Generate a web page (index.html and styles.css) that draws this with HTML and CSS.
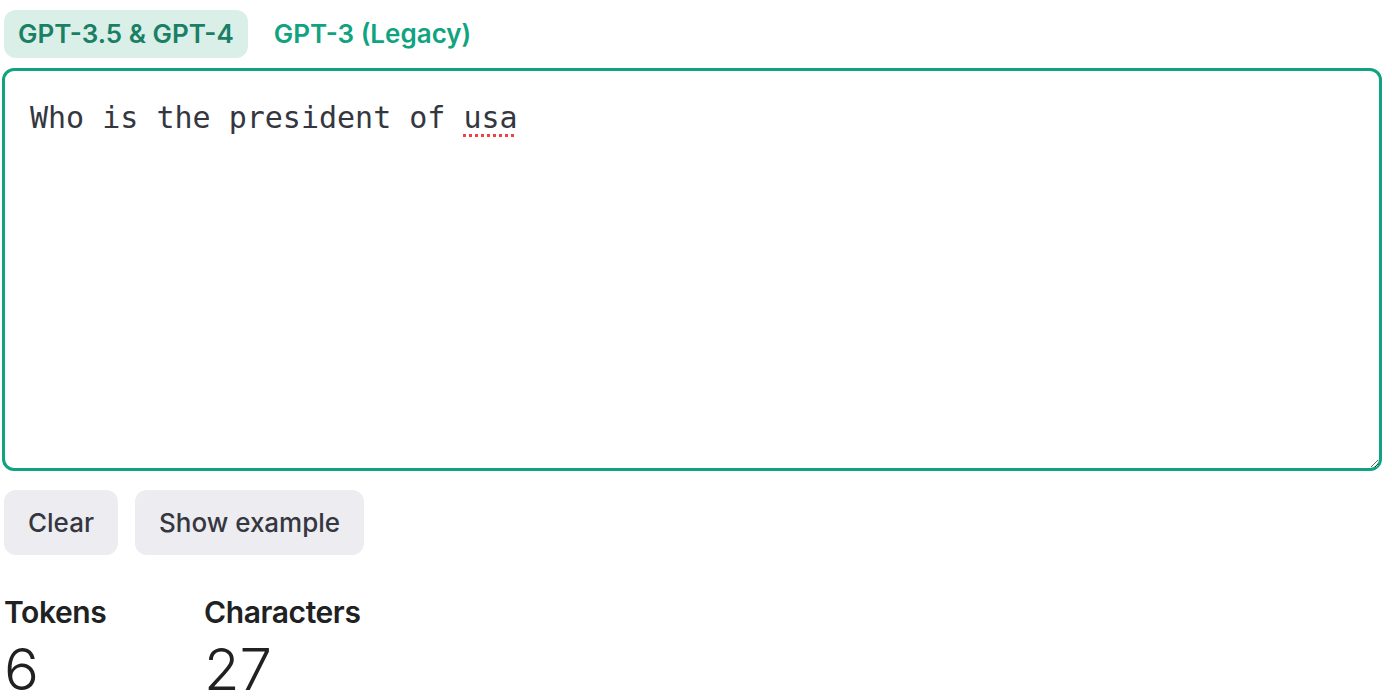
FILE: index.html
```html
<!DOCTYPE html>
<html>
<head>
<meta charset="utf-8">
<link rel="stylesheet" href="styles.css">
</head>
<body>
<div class="page">
  <div class="tabs">
    <div class="tab active">GPT-3.5 &amp; GPT-4</div>
    <div class="tab">GPT-3 (Legacy)</div>
  </div>
  <div class="editor">Who is the president of <span class="misspelt">usa</span></div>
  <div class="actions">
    <button class="btn">Clear</button>
    <button class="btn">Show example</button>
  </div>
  <div class="stats">
    <div class="stat">
      <div class="stat-label">Tokens</div>
      <div class="stat-value">6</div>
    </div>
    <div class="stat">
      <div class="stat-label">Characters</div>
      <div class="stat-value">27</div>
    </div>
  </div>
</div>
</body>
</html>
```

FILE: styles.css
```css
html, body {
  margin: 0;
  padding: 0;
  background: #ffffff;
}
.page {
  padding: 10px 10px 0 2px;
  font-family: Inter, "Noto Sans", sans-serif;
}
.tabs {
  display: flex;
  gap: 12px;
  padding-left: 2px;
}
.tab {
  height: 48px;
  line-height: 48px;
  padding: 0 14px;
  border-radius: 12px;
  font-size: 26px;
  font-weight: 600;
  letter-spacing: 0;
  color: #10a37f;
}
.tab.active {
  background: #d9efe8;
  color: #1a7f64;
}
.editor {
  margin-top: 10px;
  width: 1380px;
  height: 403px;
  box-sizing: border-box;
  border: 3px solid #10a37f;
  border-radius: 12px;
  padding: 26px 25px;
  font-family: "DejaVu Sans Mono", "Liberation Mono", monospace;
  font-size: 30px;
  line-height: 42px;
  color: #353740;
  overflow: auto;
  resize: both;
}
.misspelt {
  text-decoration: underline dotted #ef4146;
  text-decoration-thickness: 3px;
  text-underline-offset: 6px;
}
.actions {
  display: flex;
  gap: 17px;
  margin-top: 19px;
  padding-left: 2px;
}
.btn {
  height: 65px;
  padding: 0 24px;
  border: none;
  border-radius: 12px;
  background: #ececf1;
  font-family: Inter, "Noto Sans", sans-serif;
  font-size: 26px;
  font-weight: 500;
  color: #353740;
}
.stats {
  display: flex;
  margin-top: 40px;
  padding-left: 2px;
}
.stat {
  width: 200px;
}
.stat-label {
  font-size: 30px;
  font-weight: 600;
  letter-spacing: -0.4px;
  color: #202123;
  line-height: 34px;
}
.stat-value {
  font-size: 58px;
  font-weight: 300;
  color: #202123;
  line-height: 52px;
  margin-top: 14px;
}
```
